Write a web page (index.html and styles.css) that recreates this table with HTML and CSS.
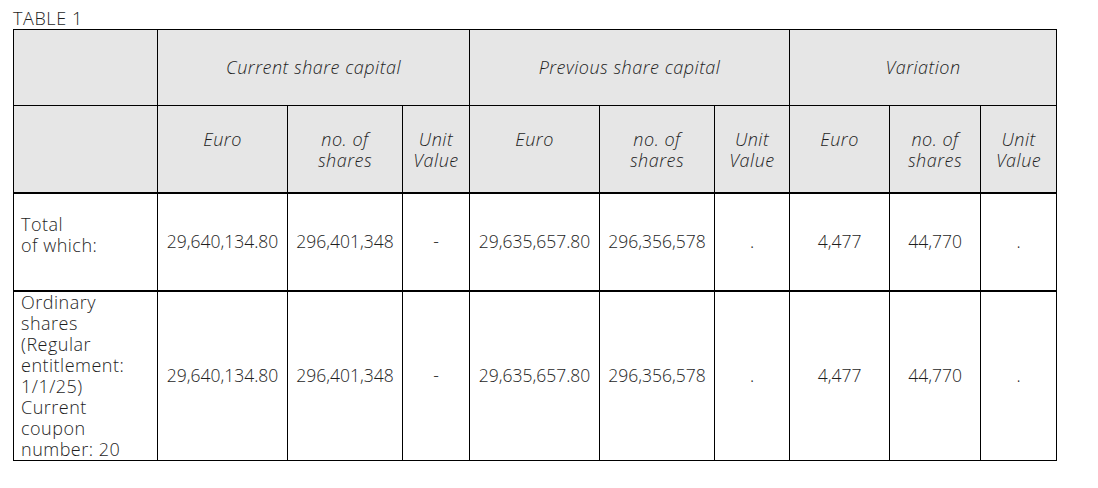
FILE: index.html
```html
<!DOCTYPE html>
<html lang="en">
<head>
<meta charset="utf-8">
<title>Table 1</title>
<link rel="stylesheet" href="styles.css">
</head>
<body>
<div class="page">
  <div class="caption">TABLE 1</div>
  <table class="capital">
    <colgroup>
      <col class="c-label">
      <col class="c-euro1">
      <col class="c-shares1">
      <col class="c-unit1">
      <col class="c-euro2">
      <col class="c-shares2">
      <col class="c-unit2">
      <col class="c-euro3">
      <col class="c-shares3">
      <col class="c-unit3">
    </colgroup>
    <thead>
      <tr class="r-group">
        <th class="head"></th>
        <th class="head" colspan="3">Current share capital</th>
        <th class="head" colspan="3">Previous share capital</th>
        <th class="head" colspan="3">Variation</th>
      </tr>
      <tr class="r-sub">
        <th class="head"></th>
        <th class="head">Euro</th>
        <th class="head">no. of<br>shares</th>
        <th class="head">Unit<br>Value</th>
        <th class="head">Euro</th>
        <th class="head">no. of<br>shares</th>
        <th class="head">Unit<br>Value</th>
        <th class="head">Euro</th>
        <th class="head">no. of<br>shares</th>
        <th class="head">Unit<br>Value</th>
      </tr>
    </thead>
    <tbody>
      <tr class="r-total">
        <td class="label label-total">Total<br>of which:</td>
        <td class="num">29,640,134.80</td>
        <td class="num">296,401,348</td>
        <td class="num">-</td>
        <td class="num">29,635,657.80</td>
        <td class="num">296,356,578</td>
        <td class="num">.</td>
        <td class="num">4,477</td>
        <td class="num">44,770</td>
        <td class="num">.</td>
      </tr>
      <tr class="r-ordinary">
        <td class="label">Ordinary<br>shares<br>(Regular<br>entitlement:<br>1/1/25)<br>Current<br>coupon<br>number: 20</td>
        <td class="num">29,640,134.80</td>
        <td class="num">296,401,348</td>
        <td class="num">-</td>
        <td class="num">29,635,657.80</td>
        <td class="num">296,356,578</td>
        <td class="num">.</td>
        <td class="num">4,477</td>
        <td class="num">44,770</td>
        <td class="num">.</td>
      </tr>
    </tbody>
  </table>
</div>
</body>
</html>
```

FILE: styles.css
```css
html, body {
  margin: 0;
  padding: 0;
  background: #ffffff;
}

body {
  font-family: "Open Sans", "Lato", "DejaVu Sans", sans-serif;
  font-weight: 300;
  font-size: 18px;
  line-height: 21px;
  color: #1e1e1e;
}

.page {
  padding: 8px 0 0 13px;
}

.caption {
  height: 21px;
  line-height: 21px;
  letter-spacing: 0.6px;
}

.capital {
  border-collapse: collapse;
  table-layout: fixed;
  width: 1044px;
}

.c-label { width: 144px; }
.c-euro1 { width: 130px; }
.c-shares1 { width: 115px; }
.c-unit1 { width: 67px; }
.c-euro2 { width: 130px; }
.c-shares2 { width: 115px; }
.c-unit2 { width: 75px; }
.c-euro3 { width: 100px; }
.c-shares3 { width: 91px; }
.c-unit3 { width: 76px; }

.capital th,
.capital td {
  border: 1px solid #000;
  padding: 0;
  vertical-align: middle;
  text-align: center;
  white-space: nowrap;
}

.head {
  background: #e6e6e6;
  font-style: italic;
  font-weight: 300;
  letter-spacing: 0.5px;
}

.r-group { height: 76px; }
.r-sub { height: 87px; }
.r-total { height: 98px; }
.r-ordinary { height: 169px; }

.r-sub th {
  border-bottom: 2px solid #000;
  vertical-align: top;
  padding-top: 23px;
}

.r-total td { border-bottom: 2px solid #000; }

.label {
  text-align: left !important;
  padding-left: 7px !important;
  letter-spacing: 0.5px;
}

.label-total {
  padding-bottom: 13px !important;
}

.num {
  font-size: 17.5px;
  letter-spacing: 0;
}
```
